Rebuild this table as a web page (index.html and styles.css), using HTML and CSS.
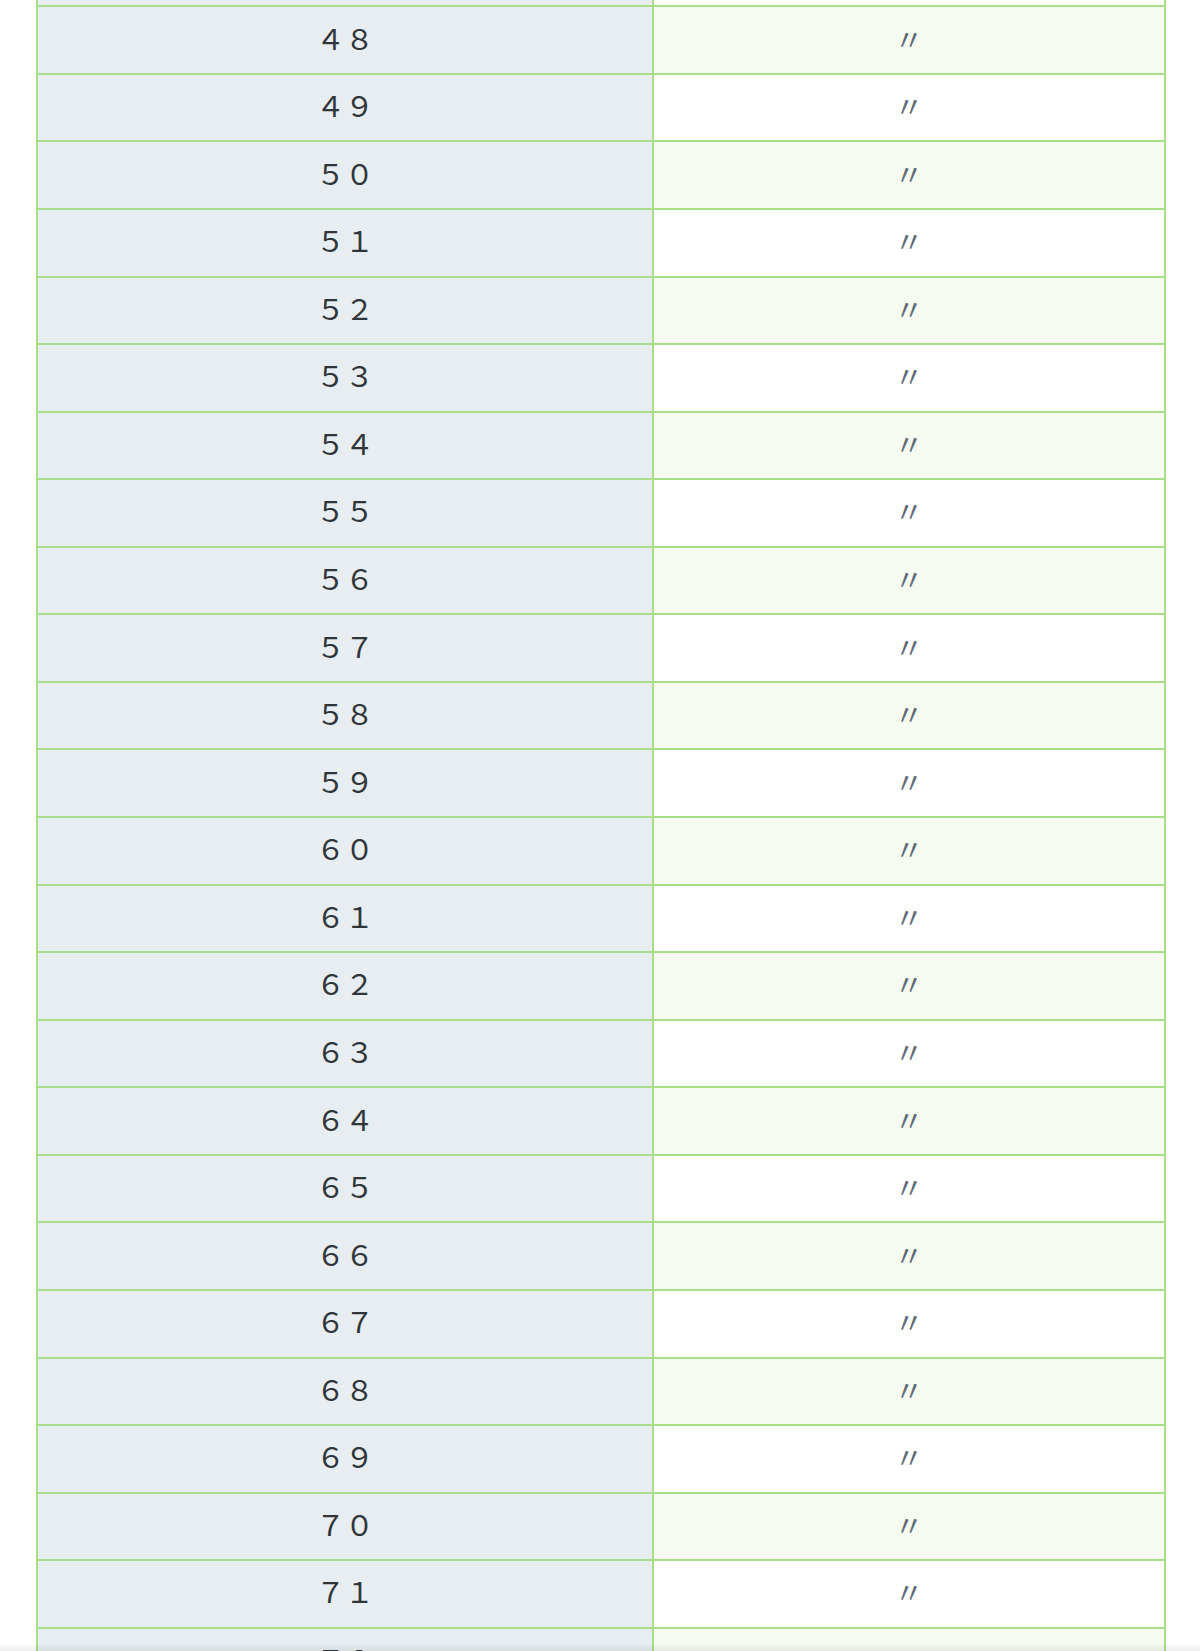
FILE: index.html
```html
<!DOCTYPE html>
<html lang="ja">
<head>
<meta charset="utf-8">
<title>表</title>
<link rel="stylesheet" href="styles.css">
</head>
<body>
<div class="sheet">
  <div class="row"><div class="num">４７</div><div class="mark">〃</div></div>
  <div class="row"><div class="num">４８</div><div class="mark">〃</div></div>
  <div class="row"><div class="num">４９</div><div class="mark">〃</div></div>
  <div class="row"><div class="num">５０</div><div class="mark">〃</div></div>
  <div class="row"><div class="num">５１</div><div class="mark">〃</div></div>
  <div class="row"><div class="num">５２</div><div class="mark">〃</div></div>
  <div class="row"><div class="num">５３</div><div class="mark">〃</div></div>
  <div class="row"><div class="num">５４</div><div class="mark">〃</div></div>
  <div class="row"><div class="num">５５</div><div class="mark">〃</div></div>
  <div class="row"><div class="num">５６</div><div class="mark">〃</div></div>
  <div class="row"><div class="num">５７</div><div class="mark">〃</div></div>
  <div class="row"><div class="num">５８</div><div class="mark">〃</div></div>
  <div class="row"><div class="num">５９</div><div class="mark">〃</div></div>
  <div class="row"><div class="num">６０</div><div class="mark">〃</div></div>
  <div class="row"><div class="num">６１</div><div class="mark">〃</div></div>
  <div class="row"><div class="num">６２</div><div class="mark">〃</div></div>
  <div class="row"><div class="num">６３</div><div class="mark">〃</div></div>
  <div class="row"><div class="num">６４</div><div class="mark">〃</div></div>
  <div class="row"><div class="num">６５</div><div class="mark">〃</div></div>
  <div class="row"><div class="num">６６</div><div class="mark">〃</div></div>
  <div class="row"><div class="num">６７</div><div class="mark">〃</div></div>
  <div class="row"><div class="num">６８</div><div class="mark">〃</div></div>
  <div class="row"><div class="num">６９</div><div class="mark">〃</div></div>
  <div class="row"><div class="num">７０</div><div class="mark">〃</div></div>
  <div class="row"><div class="num">７１</div><div class="mark">〃</div></div>
  <div class="row"><div class="num">７２</div><div class="mark">〃</div></div>
</div>
<div class="bottom-shade"></div>
</body>
</html>
```

FILE: styles.css
```css
html, body {
  margin: 0;
  padding: 0;
  background: #ffffff;
  overflow: hidden;
}
body {
  font-family: "Noto Sans CJK JP", "Noto Sans", sans-serif;
  color: #333a40;
}
.sheet {
  margin-top: -60.3px;
  margin-left: 36px;
  width: 1130px;
  box-sizing: border-box;
  border-left: 2px solid #a9de88;
  border-right: 2px solid #a9de88;
}
.row {
  display: grid;
  grid-template-columns: 614px 1fr;
  height: 67.57px;
  box-sizing: border-box;
  border-bottom: 2px solid #a9de88;
}
.num {
  background: #e8edf1;
  display: flex;
  align-items: center;
  justify-content: center;
  padding-bottom: 6px;
  font-size: 29px;
  line-height: 1;
  color: #30353a;
}
.mark {
  border-left: 2px solid #a9de88;
  display: flex;
  align-items: center;
  justify-content: center;
  padding-bottom: 4px;
  font-size: 29px;
  line-height: 1;
  color: #5f6b76;
  background: #ffffff;
}
.row:nth-child(even) .mark {
  background: #f6fbf1;
}
.bottom-shade {
  position: fixed;
  left: 0;
  right: 0;
  bottom: 0;
  height: 8px;
  background: linear-gradient(to bottom, rgba(0,0,0,0), rgba(0,0,0,0.07));
}
```
